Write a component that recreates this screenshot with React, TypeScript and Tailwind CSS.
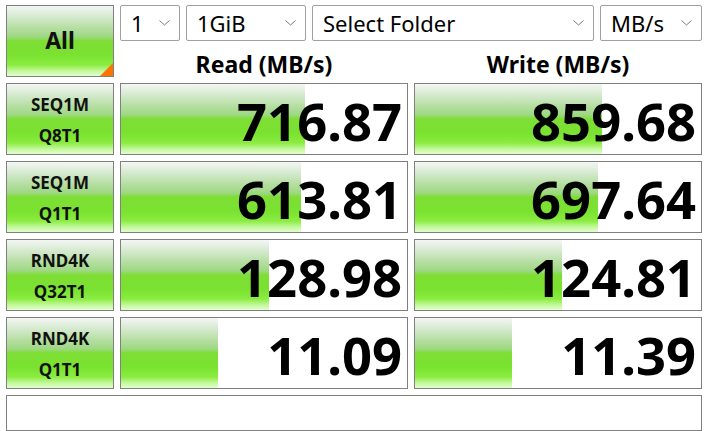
import React from "react";

const GRAD =
  "bg-[linear-gradient(to_bottom,#f4f6f4_0%,#d6ead0_15%,#b4dea0_32%,#9ed884_44%,#7ede34_50%,#7ae230_70%,#8aec40_84%,#c4f89c_93%,#e2fdd0_100%)]";

const font = { fontFamily: '"Noto Sans", "Open Sans", sans-serif' };

function Chevron() {
  return (
    <svg width="11" height="6" viewBox="0 0 11 6" className="shrink-0">
      <path d="M0.5 0.5 L5.5 5 L10.5 0.5" fill="none" stroke="#7a7a7a" strokeWidth="1" />
    </svg>
  );
}

function Dropdown({ label, w }: { label: string; w: string }) {
  return (
    <div
      className={`${w} shrink-0 h-[36px] border border-[#a0a0a0] rounded-[2px] bg-white flex items-center justify-between pl-[10px] pr-[9px] text-[22px] text-black`}
    >
      <span className="leading-none pb-[1px]">{label}</span>
      <Chevron />
    </div>
  );
}

function Label({ a, b }: { a: string; b: string }) {
  return (
    <div
      className={`w-[108px] shrink-0 h-[72px] border border-[#808080] ${GRAD} flex flex-col items-center justify-center pt-[2px] text-[17px] font-bold text-[#111] leading-[31px]`}
    >
      <span>{a}</span>
      <span>{b}</span>
    </div>
  );
}

function Cell({ value, bar }: { value: string; bar: number }) {
  return (
    <div className="relative w-[288px] shrink-0 h-[72px] border border-[#808080] bg-white">
      <div className={`absolute left-0 top-0 bottom-0 ${GRAD}`} style={{ width: `${bar}px` }} />
      <div className="relative h-full flex items-center justify-end pr-[5px] text-[52.5px] font-bold text-black leading-[70px] pt-[3px]">
        {value}
      </div>
    </div>
  );
}

const rows = [
  { a: "SEQ1M", b: "Q8T1", r: "716.87", rb: 184, w: "859.68", wb: 187 },
  { a: "SEQ1M", b: "Q1T1", r: "613.81", rb: 180, w: "697.64", wb: 183 },
  { a: "RND4K", b: "Q32T1", r: "128.98", rb: 148, w: "124.81", wb: 147 },
  { a: "RND4K", b: "Q1T1", r: "11.09", rb: 97, w: "11.39", wb: 97 },
];

export default function App() {
  return (
    <div className="w-[705px] h-[431px] bg-white flex flex-col gap-[6px] pt-[5px] pl-[6px] overflow-hidden" style={font}>
      <div className="flex gap-[6px]">
        <div
          className={`relative w-[108px] shrink-0 h-[72px] border border-[#808080] ${GRAD} flex items-center justify-center text-[23px] font-bold text-[#111] overflow-hidden`}
        >
          <span className="pb-[2px]">All</span>
          <div className="absolute right-0 bottom-0 w-0 h-0 border-l-[13px] border-l-transparent border-b-[13px] border-b-[#ff7300]" />
        </div>
        <div className="flex flex-col w-[582px] shrink-0">
          <div className="flex gap-[6px]">
            <Dropdown label="1" w="w-[60px]" />
            <Dropdown label="1GiB" w="w-[120px]" />
            <Dropdown label="Select Folder" w="w-[282px]" />
            <Dropdown label="MB/s" w="w-[102px]" />
          </div>
          <div className="flex gap-[6px] h-[36px] items-center text-[23px] font-bold text-black">
            <div className="w-[288px] text-center pt-[11px]">Read (MB/s)</div>
            <div className="w-[288px] text-center pt-[11px]">Write (MB/s)</div>
          </div>
        </div>
      </div>
      {rows.map((r, i) => (
        <div key={i} className="flex gap-[6px]">
          <Label a={r.a} b={r.b} />
          <Cell value={r.r} bar={r.rb} />
          <Cell value={r.w} bar={r.wb} />
        </div>
      ))}
      <div className="w-[696px] h-[36px] border border-[#808080] bg-white" />
    </div>
  );
}
